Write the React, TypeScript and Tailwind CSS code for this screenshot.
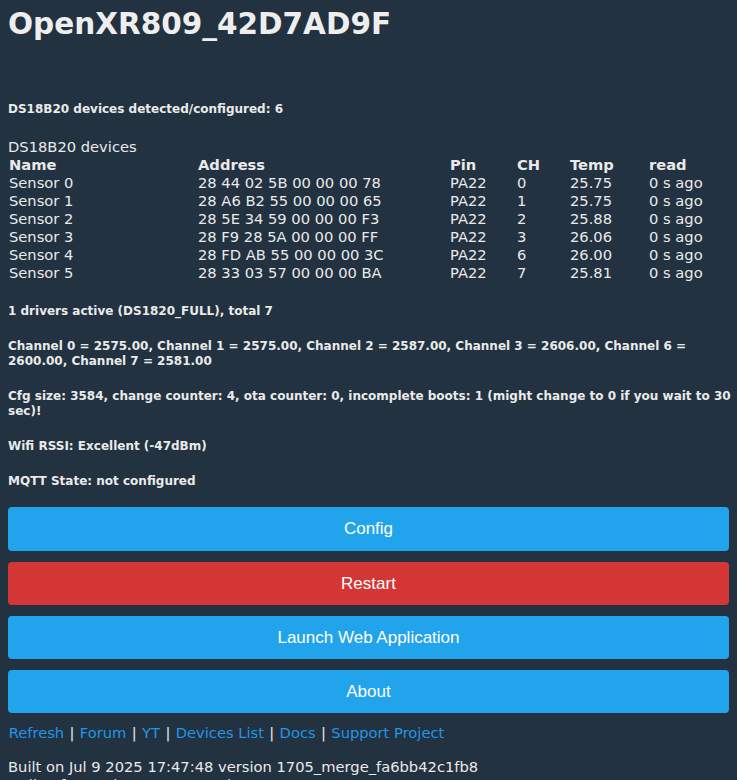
const sensors = [
  { name: "Sensor 0", addr: "28 44 02 5B 00 00 00 78", pin: "PA22", ch: "0", temp: "25.75" },
  { name: "Sensor 1", addr: "28 A6 B2 55 00 00 00 65", pin: "PA22", ch: "1", temp: "25.75" },
  { name: "Sensor 2", addr: "28 5E 34 59 00 00 00 F3", pin: "PA22", ch: "2", temp: "25.88" },
  { name: "Sensor 3", addr: "28 F9 28 5A 00 00 00 FF", pin: "PA22", ch: "3", temp: "26.06" },
  { name: "Sensor 4", addr: "28 FD AB 55 00 00 00 3C", pin: "PA22", ch: "6", temp: "26.00" },
  { name: "Sensor 5", addr: "28 33 03 57 00 00 00 BA", pin: "PA22", ch: "7", temp: "25.81" },
];

const links = ["Refresh", "Forum", "YT", "Devices List", "Docs", "Support Project"];

const row = "grid grid-cols-[189px_252px_67px_53px_79px_1fr] h-[18px] leading-[18px]";

export default function App() {
  return (
    <div className="min-h-[780px] bg-[#223240] text-[#eaeaea] px-2 pb-4 font-['DejaVu_Sans',sans-serif] text-[14.7px] overflow-hidden">
      <h1 className="pt-[6px] text-[29.5px] leading-[37px] font-bold text-[#eeeeee]">OpenXR809_42D7AD9F</h1>

      <p className="mt-[59px] text-[12px] leading-[15px] font-bold">DS18B20 devices detected/configured: 6</p>

      {/* tabelle */}
      <div className="mt-[21px] leading-[18px]">DS18B20 devices</div>
      <div className="pl-px">
        <div className={`${row} font-bold`}>
          <span>Name</span>
          <span>Address</span>
          <span>Pin</span>
          <span>CH</span>
          <span>Temp</span>
          <span>read</span>
        </div>
        {sensors.map((s) => (
          <div key={s.name} className={row}>
            <span>{s.name}</span>
            <span>{s.addr}</span>
            <span>{s.pin}</span>
            <span>{s.ch}</span>
            <span>{s.temp}</span>
            <span>0 s ago</span>
          </div>
        ))}
      </div>

      <div className="mt-[22px] -mr-2 flex flex-col gap-[20px] text-[12px] leading-[15px] font-bold">
        <p>1 drivers active (DS1820_FULL), total 7</p>
        <p>
          Channel 0 = 2575.00, Channel 1 = 2575.00, Channel 2 = 2587.00, Channel 3 = 2606.00, Channel 6 =
          2600.00, Channel 7 = 2581.00
        </p>
        <p>Cfg size: 3584, change counter: 4, ota counter: 0, incomplete boots: 1 (might change to 0 if you wait to 30 sec)!</p>
        <p>Wifi RSSI: Excellent (-47dBm)</p>
        <p>MQTT State: not configured</p>
      </div>

      <div className="mt-[18px] flex flex-col gap-[11px] font-['Liberation_Sans',Arial,sans-serif] text-[17px] text-white">
        <button className="h-[44px] w-full rounded bg-[#21a4ec]">Config</button>
        <button className="h-[43px] w-full rounded bg-[#d43636]">Restart</button>
        <button className="h-[43px] w-full rounded bg-[#21a4ec]">Launch Web Application</button>
        <button className="h-[43px] w-full rounded bg-[#21a4ec]">About</button>
      </div>

      <div className="mt-[11px] leading-[18px]">
        {links.map((l, i) => (
          <span key={l}>
            {i > 0 && <span> | </span>}
            <a href="#" className="px-[0.7px] text-[#2196e8]">{l}</a>
          </span>
        ))}
      </div>

      <div className="mt-[16px] leading-[18px]">
        <div>Built on Jul 9 2025 17:47:48 version 1705_merge_fa6bb42c1fb8</div>
        <div>Online for 1 minute 38 seconds</div>
      </div>
    </div>
  );
}
